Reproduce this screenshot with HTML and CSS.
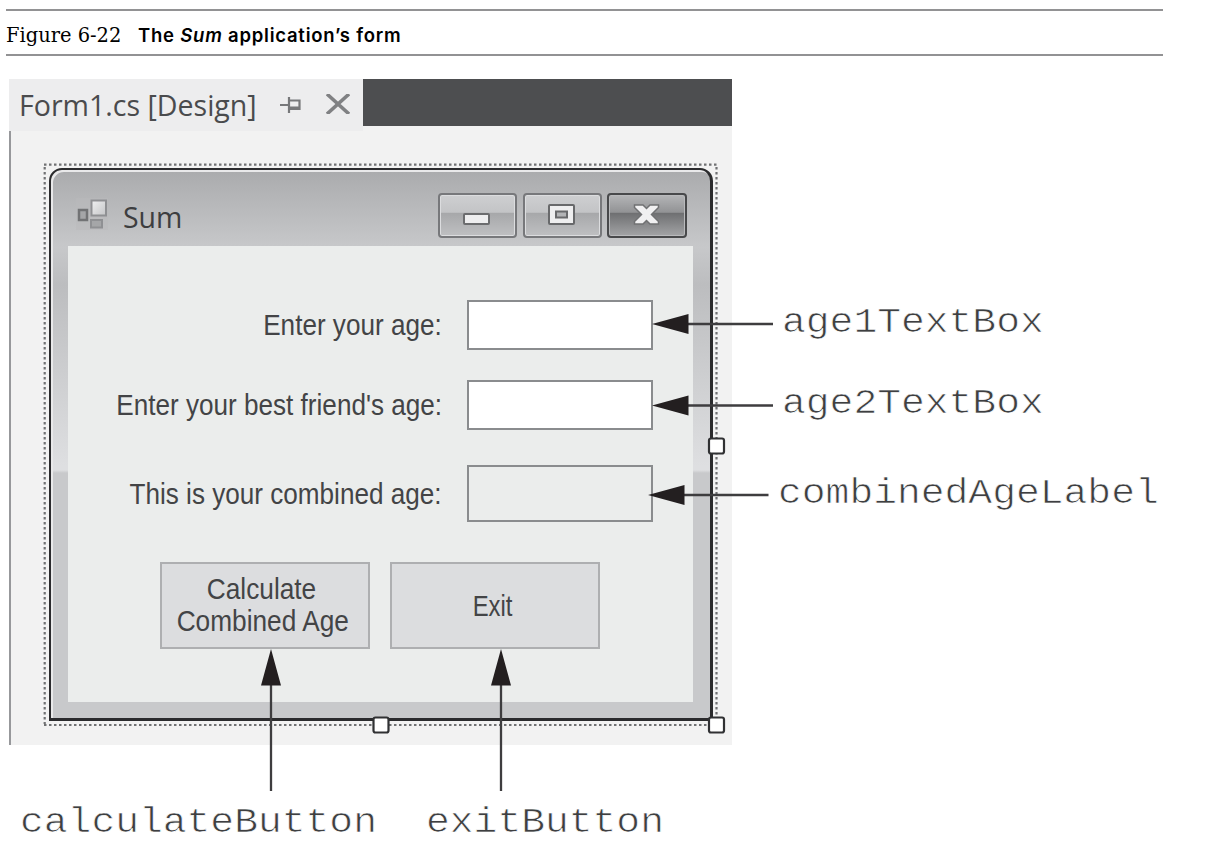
FILE: index.html
```html
<!DOCTYPE html>
<html lang="en">
<head>
<meta charset="utf-8">
<title>Figure 6-22</title>
<link rel="stylesheet" href="styles.css">
</head>
<body>
<figure class="figure">
  <figcaption class="caption"><span class="caption-number">Figure 6-22</span><span class="caption-title">The <em>Sum</em> application’s form</span></figcaption>
  <div class="diagram">
    <section class="designer">
      <header class="tabs">
        <div class="tab">
          <span class="tab-name">Form1.cs [Design]</span>
          <svg class="pin" width="22" height="18" viewBox="0 0 22 18"><path d="M0 9h9M9 1v16M9 4.500h10.500v8.500H9M9 11.500h11" fill="none" stroke="#77787a" stroke-width="2.200"/></svg>
          <svg class="tab-close" width="24" height="20" viewBox="0 0 24 20"><path d="M1 0L23 20M23 0L1 20" stroke="#808183" stroke-width="3.500"/></svg>
        </div>
        <div class="tab-strip"></div>
      </header>
      <div class="surface">
        <div class="window">
          <header class="titlebar">
            <svg class="form-icon" width="32" height="32" viewBox="0 0 32 32">
              <defs><linearGradient id="tile" x2="1" y2="1"><stop stop-color="#f0f0f1"/><stop offset="1" stop-color="#c4c5c7"/></linearGradient></defs>
              <rect width="32" height="32" fill="#b9babc" opacity=".5"/>
              <rect x="3" y="12" width="8" height="10" fill="#a5a6a8" stroke="#727375" stroke-width="2.500"/>
              <rect x="15.500" y="2.500" width="14.500" height="15" fill="url(#tile)" stroke="#8f9093" stroke-width="2"/>
              <rect x="15" y="22" width="11" height="7.500" fill="#a5a6a8" stroke="#8f9093" stroke-width="2"/>
            </svg>
            <span class="window-name">Sum</span>
            <div class="controls">
              <span class="control"><svg width="76" height="42" viewBox="0 0 76 42"><rect x="24" y="19" width="25" height="10" rx="1" fill="#eeeeef" stroke="#6b6c6e" stroke-width="2"/></svg></span>
              <span class="control"><svg width="76" height="42" viewBox="0 0 76 42"><rect x="24" y="10" width="25" height="19" rx="1" fill="#eeeeef" stroke="#68696b" stroke-width="2"/><rect x="31" y="16.500" width="11" height="6" fill="#b3b4b6" stroke="#68696b" stroke-width="2"/></svg></span>
              <span class="control close"><svg width="77" height="42" viewBox="0 0 77 42"><path d="M25.500 10h8.500l3.500 3.500 3.500-3.500h8.500v2.500l-7 7 7 7v2.500h-8.500l-3.500-3.500-3.500 3.500h-8.500v-2.500l7-7-7-7z" fill="#f0f0f1" stroke="#707173" stroke-width="1.500"/></svg></span>
            </div>
          </header>
          <div class="client">
            <div class="fields">
              <span class="label first"><span>Enter your age:</span></span><span class="box"></span>
              <span class="label second"><span>Enter your best friend's age:</span></span><span class="box"></span>
              <span class="label third"><span>This is your combined age:</span></span><span class="box result"></span>
            </div>
            <div class="buttons">
              <div class="button"><span class="calc">Calculate</span><span class="comb">Combined Age</span></div>
              <div class="button"><span class="exit">Exit</span></div>
            </div>
          </div>
        </div>
      </div>
    </section>
    <div class="side-names">
      <span class="name">age1TextBox</span>
      <span class="name">age2TextBox</span>
      <span class="name combined">combinedAgeLabel</span>
    </div>
    <div class="bottom-names">
      <span class="name calculate">calculateButton</span>
      <span class="name">exitButton</span>
    </div>
  </div>
  <svg class="marks" width="1232" height="860" viewBox="0 0 1232 860">
    <g fill="none" stroke="#707173" stroke-width="2.200" stroke-dasharray="2.5 2.5">
      <path d="M44 164.700H717M44 725H717M44.700 167V724M716.500 167V724"/>
    </g>
    <g fill="#fff" stroke="#303133" stroke-width="2.200">
      <rect x="709" y="438.500" width="15" height="15" rx="2"/>
      <rect x="373.500" y="717.500" width="15" height="15" rx="2"/>
      <rect x="709" y="717.500" width="15" height="15" rx="2"/>
    </g>
    <path d="M685 324H773M685 405.500H773M681 495H768.500M271 683V791M501 683V791" stroke="#3e3d3f" stroke-width="2.300"/>
    <path d="M652 324l36.500-10v20zM652 405.500l36.500-10v20zM648 495l36.500-10v20zM271 649l-10 36.500h20zM501 649l-10 36.500h20z" fill="#231f20"/>
  </svg>
</figure>
</body>
</html>
```
FILE: styles.css
```css
* { box-sizing: border-box; }
body { margin: 0; width: 1232px; height: 860px; overflow: hidden; background: #fff; color: #333436; }
.figure { position: relative; margin: 0; padding: 9px 0 0 6px; height: 860px; }
.caption { display: flex; width: 1157px; height: 47px; border-top: 2px solid #929294; border-bottom: 2px solid #929294; color: #000; line-height: 48px; white-space: nowrap; }
.caption-number { width: 132px; font: 20px/49px "DejaVu Serif", serif; transform: scaleX(.972); transform-origin: left; }
.caption-title { font: 600 18.500px/49px Inter, sans-serif; letter-spacing: .77px; }
.diagram { display: grid; grid-template-columns: 723px 1fr; grid-template-rows: 666px 1fr; margin: 23px 0 0 3px; }
.designer { background: #f2f2f2; }
.tabs { display: flex; height: 52px; }
.tab { display: flex; align-items: center; width: 354px; padding-left: 10px; background: #ededee; }
.tab-name { width: 262px; font: 29px/52px "Open Sans", sans-serif; white-space: nowrap; color: #4a4b4d; transform: scaleX(.984); transform-origin: left; }
.pin { margin-left: -1px; }
.tab-close { margin-left: 24px; margin-top: -2px; }
.tab-strip { flex: 1; height: 47px; background: #4d4e50; }
.surface { height: 614px; padding: 37px 0 0 38px; border-left: 2px solid #97989b; }
.window { width: 664px; height: 553px; padding: 0 17px 16px; border: 2px solid #2b2b2d; border-width: 2px 3px 3px 2px; border-radius: 13px 13px 0 0; box-shadow: inset 2px 2px #e9e9ea; background: linear-gradient(#aaabad 0, #c7c8ca 77px, #bcbdbf 115px, #dedfe1 296px, #dedfe1 300px, #c8c9cb 303px); }
.titlebar { display: flex; height: 76px; padding: 23px 5px 0 8px; }
.form-icon { margin-top: 5px; }
.window-name { width: 315px; margin-left: 15px; font: 29px/48px "Open Sans", sans-serif; color: #3d3e40; transform: scaleX(.98); transform-origin: left; }
.controls { display: flex; gap: 6px; }
.control { width: 79px; height: 45px; border: 2px solid #77787b; border-radius: 4px; box-shadow: inset 0 0 0 1px #dcdddf; background: linear-gradient(#cecfd1, #c3c4c6 42%, #a7a8aa 45%, #bfc0c2); }
.close { width: 80px; margin-left: -1px; border-color: #48494b; box-shadow: inset 0 0 0 1px #b9babc; background: linear-gradient(#b4b5b7, #929395 42%, #6f7072 45%, #a3a4a6); }
.control svg { display: block; }
.client { height: 456px; padding-top: 54px; background: #ebedec; }
.fields { display: grid; grid-template-columns: 373px 186px; grid-template-rows: 50px 50px 57px; row-gap: 30px; column-gap: 26px; }
.fields .result { margin-top: 5px; height: 57px; background: #ebedec; }
.fields .third { margin-top: 5px; line-height: 58px; }
.label { text-align: right; font: 29.500px/49px "Liberation Sans", Arial, sans-serif; white-space: nowrap; color: #434446; }
.label span { display: inline-block; transform: translateX(1px) scaleX(.885); transform-origin: right; }
.box { height: 50px; border: 2px solid #8a8c8e; background: #fff; }
.buttons { display: flex; gap: 20px; margin: 45px 0 0 92px; }
.button { display: flex; flex-direction: column; align-items: center; justify-content: center; width: 210px; height: 87px; padding-bottom: 2px; border: 2px solid #aeafb1; background: #dcdddf; font: 29.500px/32px "Liberation Sans", Arial, sans-serif; white-space: nowrap; color: #434446; }
.button span { transform: translateX(-2px) scaleX(.89); }
.button .calc { transform: translateX(-4px) scaleX(.89); }
.button .exit { padding-top: 2px; transform: translateX(-2px) scaleX(.81); }
.side-names { display: flex; flex-direction: column; align-items: flex-start; padding: 224px 0 0 50px; }
.name { display: block; height: 41px; font: 35px/41px "Liberation Mono", "Courier New", monospace; color: #3e3f41; -webkit-text-stroke: .7px #fff; white-space: nowrap; transform: scaleX(1.133); transform-origin: left; }
.side-names .name { margin-bottom: 40px; }
.side-names .combined { margin: 9px 0 0 -4px; }
.bottom-names { display: flex; grid-column: 1 / 3; padding: 58px 0 0 11px; }
.calculate { width: 406px; }
.marks { position: absolute; left: 0; top: 0; }
```
